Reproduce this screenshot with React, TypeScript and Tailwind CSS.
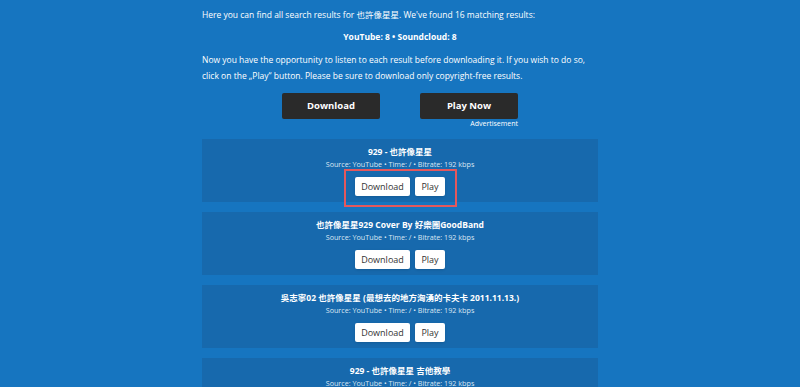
import React from 'react';

const font = { fontFamily: '"Open Sans", "Noto Sans CJK TC", sans-serif' };

const results = [
  { title: '929 - 也許像星星', highlight: true },
  { title: '也許像星星929 Cover By 好樂團GoodBand' },
  { title: '吳志寧02 也許像星星 (最想去的地方洶湧的卡夫卡 2011.11.13.)' },
  { title: '929 - 也許像星星 吉他教學' },
];

function ResultCard({ title, highlight }: { title: string; highlight?: boolean }) {
  return (
    <div className="flex h-[63px] shrink-0 flex-col items-center bg-[#1769ad] pt-[6px]">
      <div className="text-[8.5px] font-bold leading-[14px] text-white">{title}</div>
      <div className="text-[7.2px] leading-[10px] text-[#dbe7f3]">
        Source: YouTube • Time: / • Bitrate: 192 kbps
      </div>
      <div className="relative mt-[8px] flex gap-[5px]">
        <button
          type="button"
          className="h-[19px] w-[55px] rounded-[2px] bg-white text-[9px] text-[#333] shadow-sm"
        >
          Download
        </button>
        <button
          type="button"
          className="h-[19px] w-[30px] rounded-[2px] bg-white text-[9px] text-[#333] shadow-sm"
        >
          Play
        </button>
        {highlight && (
          <div className="absolute -top-[8px] -right-[12px] -bottom-[11px] -left-[11px] border-2 border-[#e4585d]" />
        )}
      </div>
    </div>
  );
}

export default function App() {
  return (
    <div className="h-[387px] w-full overflow-hidden bg-[#1675c0]" style={font}>
      <div className="mx-auto flex w-[396px] flex-col pt-[7px] text-white">
        <p className="text-[8.5px] leading-[16px]">
          Here you can find all search results for 也許像星星. We&apos;ve found 16 matching results:
        </p>
        <p className="mt-[6px] text-center text-[8.5px] font-bold leading-[16px]">
          YouTube: 8 • Soundcloud: 8
        </p>
        <p className="mt-[7px] text-[8.5px] leading-[16px]">
          Now you have the opportunity to listen to each result before downloading it. If you wish to do so,
          click on the „Play“ button. Please be sure to download only copyright-free results.
        </p>

        <div className="mt-[9px] flex justify-center gap-10">
          <button
            type="button"
            className="h-[26px] w-[98px] rounded-[2px] bg-[#2a2a2a] text-[9.5px] font-bold text-white"
          >
            Download
          </button>
          <div className="flex flex-col items-end">
            <button
              type="button"
              className="h-[26px] w-[98px] rounded-[2px] bg-[#2a2a2a] text-[9.5px] font-bold text-white"
            >
              Play Now
            </button>
            <span className="text-[7px] leading-[10px] text-white">Advertisement</span>
          </div>
        </div>

        <div className="mt-[10px] flex flex-col gap-[10px]">
          {results.map((r) => (
            <ResultCard key={r.title} title={r.title} highlight={r.highlight} />
          ))}
        </div>
      </div>
    </div>
  );
}
